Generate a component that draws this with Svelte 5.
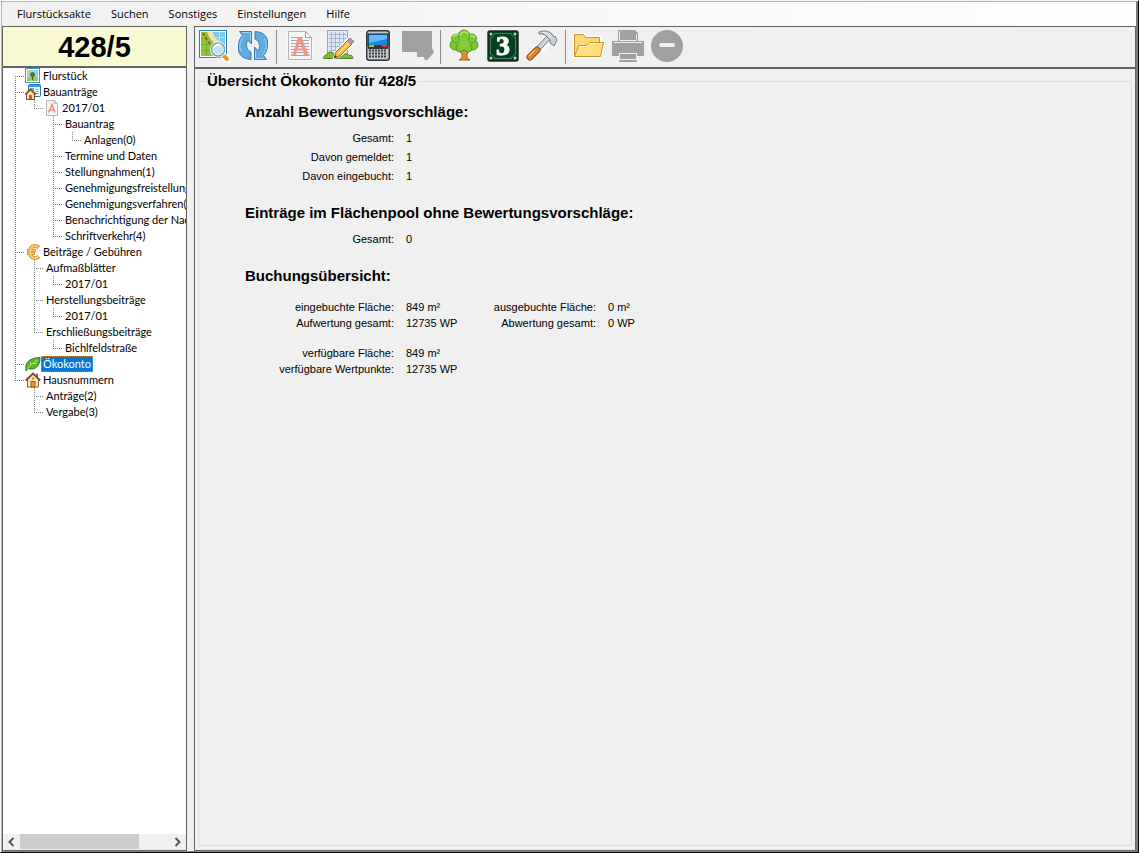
<script>
  const menu = ['Flurstücksakte', 'Suchen', 'Sonstiges', 'Einstellungen', 'Hilfe'];

  // Guide codes per level: F = first branch, T = branch, L = last branch, I = line passing by, '-' = empty
  const rows = [
    { g: 'F', icon: 'parcel', text: 'Flurstück' },
    { g: 'T', icon: 'permit', text: 'Bauanträge' },
    { g: 'IL', icon: 'doc', text: '2017/01' },
    { g: 'I-T', text: 'Bauantrag' },
    { g: 'I-IL', text: 'Anlagen(0)' },
    { g: 'I-T', text: 'Termine und Daten' },
    { g: 'I-T', text: 'Stellungnahmen(1)' },
    { g: 'I-T', text: 'Genehmigungsfreistellung' },
    { g: 'I-T', text: 'Genehmigungsverfahren(1' },
    { g: 'I-T', text: 'Benachrichtigung der Nac' },
    { g: 'I-L', text: 'Schriftverkehr(4)' },
    { g: 'T', icon: 'euro', text: 'Beiträge / Gebühren' },
    { g: 'IT', text: 'Aufmaßblätter' },
    { g: 'IIL', text: '2017/01' },
    { g: 'IT', text: 'Herstellungsbeiträge' },
    { g: 'IIL', text: '2017/01' },
    { g: 'IL', text: 'Erschließungsbeiträge' },
    { g: 'I-L', text: 'Bichlfeldstraße' },
    { g: 'T', icon: 'leaf', text: 'Ökokonto' },
    { g: 'L', icon: 'house', text: 'Hausnummern' },
    { g: '-T', text: 'Anträge(2)' },
    { g: '-L', text: 'Vergabe(3)' }
  ];
  let selected = $state(18);

  const tools = [
    { id: 'map', label: 'Karte' },
    { id: 'refresh', label: 'Aktualisieren' },
    null,
    { id: 'document', label: 'Bauantrag' },
    { id: 'plan', label: 'Aufmaßblatt' },
    { id: 'phone', label: 'Rechner' },
    { id: 'forward', label: 'Weiterleiten', off: true },
    null,
    { id: 'tree', label: 'Ökokonto' },
    { id: 'number', label: 'Hausnummer' },
    { id: 'hammer', label: 'Werkzeuge' },
    null,
    { id: 'folder', label: 'Öffnen' },
    { id: 'printer', label: 'Drucken', off: true },
    { id: 'minus', label: 'Entfernen', off: true }
  ];

  const count = [['Gesamt:', '1'], ['Davon gemeldet:', '1'], ['Davon eingebucht:', '1']];
  const pool = [['Gesamt:', '0']];
  const booked = [['eingebuchte Fläche:', '849 m²'], ['Aufwertung gesamt:', '12735 WP']];
  const debited = [['ausgebuchte Fläche:', '0 m²'], ['Abwertung gesamt:', '0 WP']];
  const available = [['verfügbare Fläche:', '849 m²'], ['verfügbare Wertpunkte:', '12735 WP']];
</script>

{#snippet guide(code)}
  <svg class="guide" viewBox="0 0 19 16" aria-hidden="true">
    {#if code === 'I' || code === 'T'}<path d="M9.5 0V16" />{/if}
    {#if code === 'F'}<path d="M9.5 8V16" />{/if}
    {#if code === 'L'}<path d="M9.5 0V8" />{/if}
    {#if 'FTL'.includes(code)}<path d="M9 8.5H19" />{/if}
  </svg>
{/snippet}

{#snippet smallIcon(name)}
  <svg class="small" viewBox="0 0 16 16" aria-hidden="true">
    {#if name === 'parcel'}
      <rect x=".5" y=".5" width="14" height="14" fill="#fff" stroke="#3c9ad0" />
      <rect x="2" y="2" width="11" height="7" fill="#9ad4f5" />
      <rect x="2" y="9" width="11" height="4" fill="#9acb4a" />
      <path d="M2 2h4L2 6z" fill="#ffc93a" />
      <rect x="7" y="8" width="1" height="4" fill="#6b4a1e" />
      <circle cx="7.500" cy="6.500" r="2.500" fill="#4a7f28" />
    {:else if name === 'permit'}
      <rect x="3.500" y=".5" width="12" height="12" rx="1" fill="#eaf5fd" stroke="#1f76b8" />
      <rect x="4" y="1" width="11" height="2" fill="#3da0de" />
      <rect x="6" y="4" width="3" height="3" fill="#5db4e8" />
      <path d="M10.500 5.500h3M10.500 7.500h3M10.500 9.500h3" stroke="#7fb9dd" />
      <path d="M1.500 10v5.500h8V10l-4-4z" fill="#f6dfae" stroke="#7b4a2a" />
      <path d="M0 10.500L5.500 5l5.500 5.500" fill="none" stroke="#8b4b33" stroke-width="1.500" />
      <rect x="4" y="11" width="3" height="4" fill="#b5692c" />
    {:else if name === 'doc'}
      <path d="M2.500.5h8l3 3v12h-11z" fill="#f4f4f4" stroke="#b9b9b9" />
      <path d="M10.500.5v3h3" fill="#ddd" stroke="#b9b9b9" />
      <path d="M4.500 12.500L8 4.500l3 8M5.800 10h4.200" fill="none" stroke="#f08a74" stroke-width="1.500" />
    {:else if name === 'euro'}
      <g fill="none" stroke="#cf9330" stroke-width="4">
        <path d="M14 3.500C12 2 10.500 2 9.500 2C7 2 5 4.500 5 8s2 6 4.500 6C11 14 12.500 14 14 12.500" />
        <path d="M2 6.500h9M2 9.500h8" stroke-width="3" />
      </g>
      <g fill="none" stroke="#f8c666" stroke-width="2.400">
        <path d="M13.500 3.500C12 2 10.500 2 9.500 2C7 2 5 4.500 5 8s2 6 4.500 6C11 14 12.500 14 13.500 12.500" />
        <path d="M3 6.500h7.500M3 9.500h6.500" stroke-width="1.500" />
      </g>
    {:else if name === 'leaf'}
      <path d="M1 13C0 6 5 2 15 1.500C15.500 9 10 15 3.500 12.500L1 15z" fill="#62b52b" stroke="#2b7a16" />
      <path d="M2 13.500C5 9 9 6 12.500 4M5.500 9.500V6M8 7.500h4" fill="none" stroke="#b5e080" />
    {:else if name === 'house'}
      <path d="M2.500 7v8h11V7L8 2z" fill="#f8e6b4" stroke="#8a6035" />
      <path d="M11 1.500h2v4h-2z" fill="#b16a47" />
      <path d="M.8 8.500L8 1.500l7.200 7" fill="none" stroke="#7b4a38" stroke-width="1.800" />
      <circle cx="8" cy="6.500" r="1.200" fill="#b98a3e" />
      <rect x="6" y="9.500" width="4" height="5.500" fill="#f0932b" stroke="#7d4b20" stroke-width=".8" />
    {/if}
  </svg>
{/snippet}

{#snippet toolIcon(name)}
  <svg class="large" viewBox="0 0 32 32" aria-hidden="true">
    {#if name === 'map'}
      <rect x="1.500" y=".5" width="27" height="27" fill="#fff" stroke="#2383bd" />
      <rect x="3" y="2" width="24" height="24" fill="#7fcbf0" />
      <path d="M3 2h7c3 6 6 9 10 12s5 8 7 12H3z" fill="#8cc63a" />
      <path d="M9 2h6c0 5 5 8 12 14v7C21 15 12 12 9 2z" fill="#f5dfae" />
      <path d="M3 8.500h8M3 14.500h12M3 20.500h14M8.500 6v20M14.500 13v13" stroke="#74ad28" />
      <path d="M21.500 2v9M15 7.500h12" stroke="#b5e3fa" />
      <path d="M5 3l4 7 4 5 3 5" fill="none" stroke="#d9251d" stroke-width="1.500" stroke-dasharray="3 2" />
      <path d="M25 25l4 4" stroke="#fff" stroke-width="6" stroke-linecap="round" />
      <path d="M24 24l2 2" stroke="#888" stroke-width="3" />
      <path d="M26.500 26.500l2.500 2.500" stroke="#e9962c" stroke-width="4" stroke-linecap="round" />
      <circle cx="20" cy="19.500" r="6.500" fill="#bfe2f6" stroke="#fff" stroke-width="3" />
      <circle cx="20" cy="19.500" r="6.500" fill="none" stroke="#7d9bb1" stroke-width="1.500" />
      <path d="M16 18c1-3 4-4 6-3" fill="none" stroke="#fff" stroke-width="2" />
    {:else if name === 'refresh'}
      {#each [0, 180] as turn}
        <g transform="rotate({turn} 16 15.500)">
          <path d="M2.500 1.500H14.500V14L11 10.500C8.500 13 9 20 14 22V29.500C5 29 .5 24 1.500 16C1.500 11 3 8 5.500 5.500z" fill="#5fabdf" stroke="#3279b2" stroke-linejoin="round" />
          <path d="M5 2.500h8.500v8M7 6C2.500 10 1.500 17 4.500 22" fill="none" stroke="#a3d2f2" />
        </g>
      {/each}
    {:else if name === 'document'}
      <path d="M4.500 1.500h17l6 6v22h-23z" fill="#f6f6f6" stroke="#b4b4b4" />
      <path d="M21.500 1.500v6h6z" fill="#fff" stroke="#a4a4a4" />
      <path d="M7 7.500h12M7 10.500h18M7 13.500h18M7 16.500h18M7 19.500h18M7 22.500h18M7 25.500h18" stroke="#94a9bb" />
      <path d="M14 7h3.500L24 24.500h2V26h-7v-1.500h1.500L19 20.500h-6l-1.500 4H13V26H7v-1.500h2zM15.700 12L13.800 18.500h4.400z" fill="#f4907e" fill-rule="evenodd" />
    {:else if name === 'plan'}
      <rect x="4.500" y=".5" width="20" height="28" fill="#dfe7f2" stroke="#93a7bd" />
      <path d="M6 4.500h17M6 8.500h17M6 12.500h17M6 16.500h17M6 20.500h17M8.500 2v22M12.500 2v22M16.500 2v22M20.500 2v22" stroke="#a3b6cd" />
      <path d="M.5 28.500c0-3 2-4 3-3 0-4 7-5 8 0 2-1 4 0 4 3zM17 28.500c0-3 2-3 3-2 1-4 5-3 6-1 3-1 4 1 4 3z" fill="#83b93a" stroke="#4f8522" />
      <path d="M11 28l2-6L25 9l5 4-13 13z" fill="#f8b843" stroke="#fff" stroke-width="2" />
      <path d="M11 28l2-6L25 10l4 4-12 12z" fill="#fab63c" stroke="#b96d17" />
      <path d="M15 24L27 12" stroke="#ffe18b" stroke-width="1.500" />
      <path d="M24.500 10.500l2.500-2.500 4 3.500-3 3z" fill="#c58bc2" stroke="#8f6799" />
      <path d="M11 28l1-3 2 2z" fill="#433" />
    {:else if name === 'phone'}
      <rect x="4.700" y=".7" width="22.600" height="29.600" rx="2.500" fill="#c4c7cc" stroke="#303236" stroke-width="1.400" />
      <rect x="6" y="4" width="20" height="12" fill="#1c86d8" stroke="#15191e" />
      <path d="M7 5h18v4L7 13z" fill="#63baf5" />
      <path d="M6 16h20v3H6z" fill="#33363a" />
      <path d="M6 19h20v9H6z" fill="#c4c7cc" />
      <rect x="7" y="15" width="5" height="2" fill="#9bd22a" /><rect x="20" y="15" width="5" height="2" fill="#f0322c" />
      <path d="M7 20.500h18M7 23.500h18M7 26.500h18" stroke="#3c3f44" stroke-width="2" stroke-dasharray="2 1" />
    {:else if name === 'forward'}
      <path d="M1 1h30v17l2 4.500-4 4.500-3 3h-2l-1-3h-7v-5H1z" fill="#a0a0a0" />
    {:else if name === 'tree'}
      <path d="M11 20l3 4v4l-3 2h11l-3-2v-4l4-5z" fill="#dc9337" stroke="#9c5b1a" />
      <path d="M7 18L6 8 12 3h9l5 6v10z" fill="#6cb82b" />
      <g fill="#7cc935" stroke="#4c9a1c">
        <circle cx="7" cy="15" r="5" /><circle cx="25" cy="15" r="5" />
        <circle cx="12" cy="18" r="4" /><circle cx="20" cy="18" r="4" />
        <circle cx="8" cy="8.500" r="4.500" /><circle cx="24" cy="8.500" r="4.500" />
        <circle cx="16" cy="6" r="6" />
      </g>
      <circle cx="16" cy="14" r="5.500" fill="#84ce3c" />
      <path d="M12 5c2-4 6-4 8-1M5 7c1-2 3-3 5-2M22 6c2-1 3 0 5 1" fill="none" stroke="#b9e87a" stroke-width="1.500" />
    {:else if name === 'number'}
      <rect x="1" y="1" width="30" height="30" rx="2" fill="#03401f" stroke="#152d21" stroke-width="1.500" />
      <path d="M7.500 3.500h17c0 2 2 4 4 4v17c-2 0-4 2-4 4h-17c0-2-2-4-4-4v-17c2 0 4-2 4-4z" fill="none" stroke="#4f7d63" />
      <g fill="#c9cfca"><circle cx="4" cy="4" r="1.500" /><circle cx="28" cy="4" r="1.500" /><circle cx="4" cy="28" r="1.500" /><circle cx="28" cy="28" r="1.500" /></g>
      <text x="16" y="25" text-anchor="middle" font-family="Liberation Serif, serif" font-size="28" font-weight="700" fill="#fff" stroke="#fff" stroke-width="1">3</text>
    {:else if name === 'hammer'}
      <path d="M5 27L23 8" stroke="#fff" stroke-width="9" stroke-linecap="round" />
      <path d="M11 20L23 7" stroke="#7a8287" stroke-width="5.500" />
      <path d="M11 20L23 7" stroke="#d3d8dc" stroke-width="3.500" />
      <path d="M4 27l7-7" stroke="#8e4d15" stroke-width="7" stroke-linecap="round" />
      <path d="M4 27l7-7" stroke="#d98630" stroke-width="5" stroke-linecap="round" />
      <path d="M3 26l6-6" stroke="#f6bd78" stroke-width="1.500" />
      <path d="M13 2c5-2 10-1 13 2l2 3 1-1 2 4-3 6-4-3 0-3-4-4c-2-2-4-2-7-2z" fill="#c6ccd0" stroke="#727a80" />
      <path d="M17 2.500c4 0 6 2 9 6" fill="none" stroke="#fff" />
    {:else if name === 'folder'}
      <path d="M1.500 26.500V4.500h9l2 3h14v6h3.500l-3.500 13z" fill="#fff" stroke="#fff" stroke-width="3" />
      <path d="M1.500 26.500V4.500h9l2 3h14v19z" fill="#fad777" stroke="#cf9130" />
      <path d="M1.500 26.500l4-11h8l3-3h14l-3 14z" fill="#ffdf80" stroke="#cf9130" />
      <path d="M6.500 16.500h7.500l3-3h12" fill="none" stroke="#fff3c4" />
    {:else if name === 'printer'}
      <path d="M6 0h17l3 3v8h6v15h-7v6H7v-6H0V11h6z" fill="#a0a0a0" />
      <path d="M7.500 1v9.500h17V4M2 12.500h28" fill="none" stroke="#f0f0f0" />
      <rect x="7.500" y="23.500" width="17" height="6" fill="none" stroke="#f0f0f0" />
    {:else if name === 'minus'}
      <circle cx="16" cy="16" r="16" fill="#a0a0a0" />
      <rect x="8" y="13" width="16" height="4" rx="2" fill="#f0f0f0" />
    {/if}
  </svg>
{/snippet}

{#snippet facts(list, kind)}
  <dl class={kind}>
    {#each list as [label, value]}
      <dt>{label}</dt>
      <dd>{value}</dd>
    {/each}
  </dl>
{/snippet}

<div class="window">
  <nav class="menu">
    {#each menu as item}<button type="button">{item}</button>{/each}
  </nav>
  <div class="body">
    <aside>
      <h1>428/5</h1>
      <ul class="rows" role="tree" aria-label="Flurstücksakte">
        {#each rows as row, i}
          <li role="treeitem" aria-selected={selected === i}>
            {#each row.g as code}{@render guide(code)}{/each}
            {#if row.icon}{@render smallIcon(row.icon)}{/if}
            <button type="button" class:selected={selected === i} onclick={() => (selected = i)}>{row.text}</button>
          </li>
        {/each}
      </ul>
      <div class="scroll">
        <button type="button" aria-label="Nach links">
          <svg viewBox="0 0 17 16"><path d="M10.500 4L6.500 8l4 4" /></svg>
        </button>
        <div class="track"><div class="thumb"></div></div>
        <button type="button" aria-label="Nach rechts">
          <svg viewBox="0 0 17 16"><path d="M6.500 4L10.500 8L6.500 12" /></svg>
        </button>
      </div>
    </aside>
    <main>
      <div class="toolbar" role="toolbar" aria-label="Werkzeugleiste">
        {#each tools as tool}
          {#if tool}
            <button type="button" aria-label={tool.label} disabled={tool.off}>{@render toolIcon(tool.id)}</button>
          {:else}
            <span class="separator"></span>
          {/if}
        {/each}
      </div>
      <fieldset>
        <legend>Übersicht Ökokonto für 428/5</legend>
        <section>
          <h2>Anzahl Bewertungsvorschläge:</h2>
          {@render facts(count, 'loose')}
        </section>
        <section>
          <h2>Einträge im Flächenpool ohne Bewertungsvorschläge:</h2>
          {@render facts(pool, 'loose')}
        </section>
        <section>
          <h2>Buchungsübersicht:</h2>
          <div class="booking">
            {@render facts(booked, 'tight')}
            {@render facts(debited, 'tight second')}
            {@render facts(available, 'tight')}
          </div>
        </section>
      </fieldset>
    </main>
  </div>
</div>

<style>
  :global(body) {
    margin: 0;
    background: #f0f0f0;
  }
  * {
    box-sizing: border-box;
  }
  .window {
    min-height: 100vh;
    display: flex;
    flex-direction: column;
    border: 1px solid #f8f8f8;
    border-right-color: #000;
    border-bottom-color: #000;
    background: #f0f0f0;
    font: 11px/16px 'Liberation Sans', Arial, sans-serif;
    color: #000;
  }
  button {
    border: 0;
    padding: 0;
    background: none;
    font: inherit;
    color: inherit;
    white-space: nowrap;
  }
  .menu {
    display: flex;
    gap: 20px;
    height: 25px;
    padding-left: 15px;
    border-top: 1px solid #b4b4b4;
    border-left: 1px solid #b4b4b4;
    border-right: 2px solid #787878;
    background: linear-gradient(to right, #f0f0f0, #fdfdfd 90%);
    font: 11px/24px 'Open Sans', 'Noto Sans', sans-serif;
  }
  .body {
    flex: 1;
    display: flex;
    gap: 7px;
    border-left: 1px solid #b4b4b4;
    border-right: 2px solid #787878;
    border-bottom: 1px solid #8c8c8c;
  }
  aside {
    flex: none;
    width: 185px;
    display: flex;
    flex-direction: column;
    border: 1px solid #646464;
    background: #fff;
  }
  h1 {
    margin: 0;
    height: 41px;
    border-bottom: 2px solid #646464;
    background: #fafad2;
    font-size: 29px;
    line-height: 41px;
    text-align: center;
  }
  .rows {
    flex: 1;
    margin: 0;
    padding: 0 0 0 3px;
    overflow: hidden;
    list-style: none;
    font-family: Lato, 'Liberation Sans', sans-serif;
  }
  .rows li {
    display: flex;
    height: 16px;
  }
  .rows button {
    padding: 0 2px;
    height: 16px;
    line-height: 16px;
  }
  .rows .selected {
    background: #0078d7;
    color: #fff;
    outline: 1px dotted #e08a30;
    outline-offset: -1px;
  }
  svg {
    display: block;
    flex: none;
  }
  .guide {
    width: 19px;
    height: 16px;
  }
  .guide path {
    stroke: #808080;
    stroke-dasharray: 1 1;
    shape-rendering: crispEdges;
  }
  .small {
    width: 16px;
    height: 16px;
  }
  .large {
    width: 32px;
    height: 32px;
    overflow: visible;
  }
  .toolbar button:enabled .large {
    filter: drop-shadow(0 0 1px #fff);
  }
  .scroll {
    display: flex;
    height: 16px;
    background: #f0f0f0;
  }
  .scroll svg {
    width: 17px;
    height: 16px;
    fill: none;
    stroke: #555;
    stroke-width: 2;
  }
  .track {
    flex: 1;
    height: 15px;
  }
  .thumb {
    width: 80%;
    height: 15px;
    background: #cdcdcd;
  }
  main {
    flex: 1;
    display: flex;
    flex-direction: column;
    min-width: 0;
    border: 1px solid #646464;
  }
  .toolbar {
    display: flex;
    gap: 7px;
    height: 42px;
    padding: 3px;
    border-bottom: 2px solid #646464;
  }
  .toolbar button {
    height: 32px;
  }
  .separator {
    width: 1px;
    height: 34px;
    background: #8c8c8c;
  }
  fieldset {
    flex: 1;
    min-width: 0;
    margin: 4px 3px;
    padding: 13px 8px 8px 46px;
    border: 1px solid #dcdcdc;
  }
  legend {
    margin-left: -38px;
    padding: 0 2px 0 0;
    font-size: 15px;
    font-weight: 700;
  }
  h2 {
    margin: 0;
    font-size: 15px;
    line-height: 20px;
  }
  section {
    margin-bottom: 17px;
  }
  dl {
    display: grid;
    grid-template-columns: 149px 70px;
    column-gap: 12px;
    margin: 0;
  }
  dt {
    text-align: right;
  }
  dt,
  dd {
    margin: 0;
    white-space: nowrap;
  }
  .loose {
    margin-top: 7px;
    line-height: 19px;
  }
  .booking {
    display: grid;
    grid-template-columns: auto auto;
    justify-content: start;
    gap: 14px 12px;
    margin-top: 13px;
  }
  .second {
    grid-template-columns: 108px 70px;
  }
</style>
